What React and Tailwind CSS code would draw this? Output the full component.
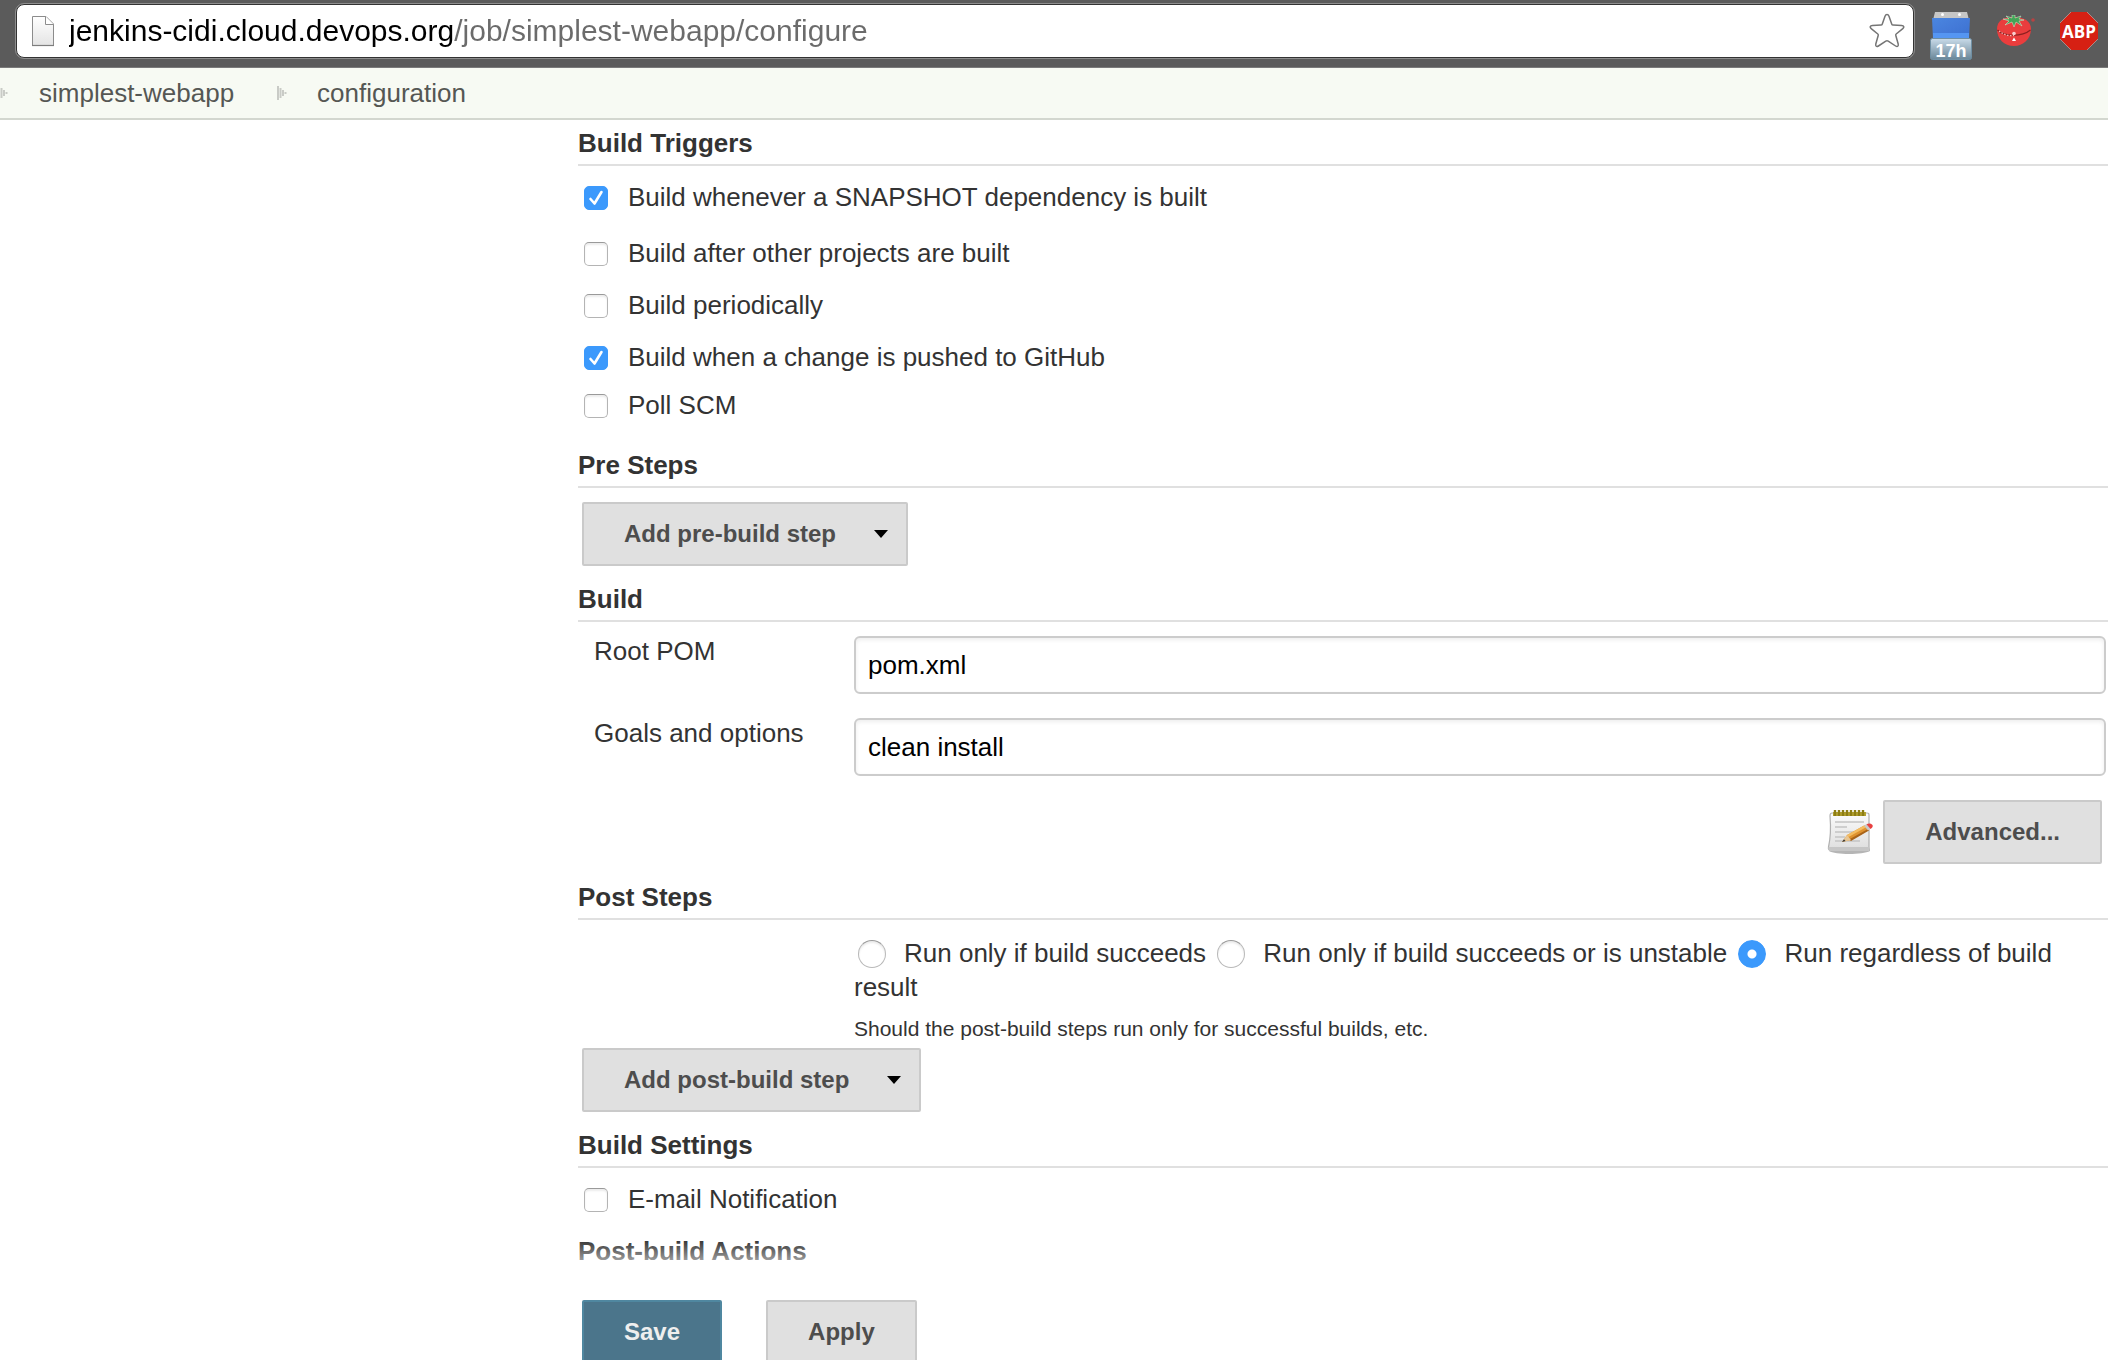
import React from "react";

function PageIcon() {
  return (
    <svg width="24" height="32" viewBox="0 0 24 32" aria-hidden="true" className="shrink-0">
      <defs>
        <linearGradient id="page" x1="0" y1="0" x2="0" y2="1">
          <stop offset="0" stopColor="#ffffff" />
          <stop offset="1" stopColor="#e4e4e4" />
        </linearGradient>
      </defs>
      <path d="M1.5 1.5H15L22.5 9V30.5H1.5Z" fill="url(#page)" stroke="#8c8c8c" strokeWidth="1" />
      <path d="M14.5 1.5V9.5H22.5" fill="#fff" stroke="#8c8c8c" strokeWidth="1" />
      <path d="M1 30.5H23" stroke="#7d7d7d" strokeWidth="1.2" />
    </svg>
  );
}

function StarIcon() {
  return (
    <svg width="36" height="36" viewBox="0 0 36 36" aria-hidden="true">
      <path
        d="M18 1.5C19 1.5 19.6 2.2 20 3.2L22.8 11.2C23 11.8 23.4 12 24 12L32.6 12.4C35 12.6 35.5 14.2 33.8 15.6L27.2 21C26.7 21.4 26.6 21.9 26.8 22.5L29.2 31C29.7 33.2 28.4 34.2 26.6 33L19.2 28.1C18.4 27.6 17.6 27.6 16.8 28.1L9.4 33C7.6 34.2 6.3 33.2 6.8 31L9.2 22.5C9.4 21.9 9.3 21.4 8.8 21L2.2 15.6C0.5 14.2 1 12.6 3.4 12.4L12 12C12.6 12 13 11.8 13.2 11.2L16 3.2C16.4 2.2 17 1.5 18 1.5Z"
        fill="#fff"
        stroke="#757575"
        strokeWidth="1.5"
      />
    </svg>
  );
}

function CalendarIcon() {
  return (
    <svg width="42" height="48" viewBox="0 0 42 48" aria-hidden="true">
      <defs>
        <linearGradient id="calBlue" x1="0" y1="0" x2="1" y2="1">
          <stop offset="0" stopColor="#4a86e0" />
          <stop offset="0.5" stopColor="#447ad8" />
          <stop offset="1" stopColor="#3a70cf" />
        </linearGradient>
        <linearGradient id="calBadge" x1="0" y1="0" x2="0" y2="1">
          <stop offset="0" stopColor="#c9dbe9" />
          <stop offset="1" stopColor="#6a8799" />
        </linearGradient>
      </defs>
      <path d="M5 0H37L38.5 6H3.500Z" fill="#c6c6c6" />
      <circle cx="12.500" cy="2.500" r="1.500" fill="#fff" />
      <circle cx="29.500" cy="2.500" r="1.500" fill="#fff" />
      <path d="M2 6H40L39 27H3Z" fill="url(#calBlue)" />
      <path d="M3 21H39V27H3Z" fill="#5596f2" />
      <rect x="0.500" y="26.500" width="41" height="21" rx="2" fill="url(#calBadge)" stroke="#6f8fa3" />
      <text x="21" y="45" textAnchor="middle" fontFamily="Liberation Sans, sans-serif" fontWeight="700" fontSize="18" fill="#fff">
        17h
      </text>
    </svg>
  );
}

function TomatoIcon() {
  return (
    <svg width="40" height="32" viewBox="0 0 40 32" aria-hidden="true">
      <path d="M1 14C1 6 7 2 17 2C28 2 35 6 35 14C35 24 27 31 18 31C8 31 1 24 1 14Z" fill="#ea3d3d" />
      <path d="M1.500 15C8 22 26 22 34.500 15" fill="none" stroke="#8e2020" strokeWidth="1.200" />
      <path d="M3 16C8 20 13 21 18 20.500" fill="none" stroke="#f6b5b5" strokeWidth="1.200" strokeDasharray="1.500 1.500" />
      <path
        d="M16 0L19 0L19 3L25 1L23 4L28 5L23 6L26 11L20 7L18 12L16 7L9 10L13 6L7 4L13 4L10 1L16 3Z"
        fill="#43a457"
        stroke="#d7f2d9"
        strokeWidth="0.500"
      />
      <circle cx="18" cy="18.500" r="1.800" fill="#f8d0d0" />
      <path d="M16 26L18 22.500L20 26Z" fill="#fff" />
      <circle cx="37" cy="5" r="1.800" fill="#b84242" />
    </svg>
  );
}

function AdblockIcon() {
  return (
    <svg width="38" height="38" viewBox="0 0 38 38" aria-hidden="true">
      <path d="M11 0H27L38 11V27L27 38H11L0 27V11Z" fill="#d62013" />
      <path d="M11 0L0 11M27 0L38 11M38 27L27 38M0 27L11 38" stroke="#b9aaa8" strokeWidth="0.700" />
      <text x="19" y="26" textAnchor="middle" fontFamily="Open Sans, sans-serif" fontWeight="700" fontSize="17" fill="#fff">
        ABP
      </text>
    </svg>
  );
}

function NotepadIcon() {
  return (
    <svg width="48" height="46" viewBox="0 0 48 46" role="img" aria-label="Customized" className="shrink-0">
      <defs>
        <linearGradient id="pad" x1="0" y1="0" x2="0" y2="1">
          <stop offset="0" stopColor="#fbfbfb" />
          <stop offset="1" stopColor="#dedede" />
        </linearGradient>
      </defs>
      <path d="M2 42C8 46 36 46 43 42L42 38H3Z" fill="#b5b5b5" />
      <path d="M5 4Q3 4 3 7Q4.500 25 1.500 38Q1 41 3 41H42V6Q42 4 40 4Z" fill="url(#pad)" stroke="#b0b0b0" strokeWidth="1.200" />
      <path d="M1.500 38Q1 42 3 42H42V38Z" fill="#c6c6c6" />
      <rect x="6" y="3" width="33" height="4" fill="#b3a22f" />
      <path d="M8 1V7M12 1V7M16 1V7M20 1V7M24 1V7M28 1V7M32 1V7M36 1V7" stroke="#8d7d14" strokeWidth="2.400" />
      <path d="M8 13H37M8 18H20M8 23H30M8 28H18M8 32H33" stroke="#c3c3c3" strokeWidth="1.300" />
      <path d="M15 33L20 26L38 16L42 21L24 31Z" fill="#df9330" />
      <path d="M20 26L38 16L39.500 18L21.500 28Z" fill="#f4bd62" />
      <path d="M22 30.500L41 20L42 21.500L24 32Z" fill="#a9641a" />
      <path d="M15 33L20 26L24 31Z" fill="#e8c795" />
      <path d="M15 33L17 30.200L18.500 32Z" fill="#333" />
      <path d="M37 16.500L40 15L43.500 19.500L41 21.500Z" fill="#c9c9c9" />
      <path d="M39.500 15.200Q43 13.500 45.500 16Q46.500 18 43.500 20Z" fill="#e84040" />
    </svg>
  );
}

function CrumbArrow() {
  return (
    <svg width="10" height="14" viewBox="0 0 10 14" aria-hidden="true" className="shrink-0">
      <path d="M1 0V14M3.500 2V12M6 4V10M8.500 6V8" stroke="#c9cbc6" strokeWidth="2" />
    </svg>
  );
}

function BrowserBar() {
  return (
    <header className="flex items-start gap-4 border-b border-[#7a7a7a] bg-[#5b5b5b] pt-1 pr-2.5 pb-[7px] pl-4">
      <div className="flex h-[54px] min-w-0 flex-1 items-center gap-[14px] rounded-lg border border-[#333] bg-white pr-2 pl-[14px] outline outline-[#8e8e8e]">
        <PageIcon />
        <input
          type="text"
          aria-label="Address"
          defaultValue="jenkins-cidi.cloud.devops.org/job/simplest-webapp/configure"
          className="h-12 min-w-0 flex-1 bg-[linear-gradient(to_right,#000_385px,#6b6b6b_385px)] bg-clip-text text-[30px] text-[#6b6b6b] outline-none [-webkit-text-fill-color:transparent]"
        />
        <button type="button" aria-label="Bookmark this page">
          <StarIcon />
        </button>
      </div>
      <div className="flex items-start gap-6 pt-2">
        <button type="button" aria-label="Calendar">
          <CalendarIcon />
        </button>
        <button type="button" aria-label="Tomato timer" className="pt-[3px]">
          <TomatoIcon />
        </button>
        <button type="button" aria-label="Adblock Plus">
          <AdblockIcon />
        </button>
      </div>
    </header>
  );
}

function Breadcrumbs() {
  return (
    <nav aria-label="Breadcrumb" className="flex items-center border-b-2 border-[#d3d7cf] bg-[#f7faf3] py-2 text-[#555753]">
      <span className="-ml-0.5 flex">
        <CrumbArrow />
      </span>
      <a href="#job" className="ml-[31px]">
        simplest-webapp
      </a>
      <span className="mr-[30px] ml-[43px] flex">
        <CrumbArrow />
      </span>
      <a href="#configuration">configuration</a>
    </nav>
  );
}

function SectionTitle({ children }) {
  return <h2 className="border-b-2 border-[#e0e0e0] pb-1 font-bold">{children}</h2>;
}

function CheckRow({ label, checked = false }) {
  return (
    <label className="flex items-start pl-1.5">
      <span className="mt-1.5 mr-5 grid size-6">
        <input
          type="checkbox"
          defaultChecked={checked}
          className="peer col-start-1 row-start-1 size-6 appearance-none rounded-[5px] border border-[#b4b4b4] border-t-[#9a9a9a] bg-white shadow-[inset_0_2px_2px_#ececec] checked:border-[#3b99fc] checked:bg-[#3b99fc] checked:shadow-none"
        />
        <svg
          viewBox="0 0 24 24"
          aria-hidden="true"
          className="pointer-events-none col-start-1 row-start-1 hidden size-6 peer-checked:block"
        >
          <path d="M6.500 13L10.500 17.500L17.500 6" fill="none" stroke="#fff" strokeWidth="2.600" strokeLinecap="round" strokeLinejoin="round" />
        </svg>
      </span>
      {label}
    </label>
  );
}

function RadioOption({ label, checked = false }) {
  return (
    <label>
      <input
        type="radio"
        name="run-condition"
        defaultChecked={checked}
        className="mr-[18px] ml-1 inline-block size-7 appearance-none rounded-full border border-[#b9b9b9] border-t-[#9a9a9a] bg-white align-[-6px] shadow-[inset_0_2px_2px_#ececec] checked:border-[#3b99fc] checked:bg-[radial-gradient(circle,#fff_4px,#3b99fc_5px)] checked:shadow-none"
      />
      {label}
    </label>
  );
}

const buttonGray = "h-16 rounded-[2px] border-2 border-[#cacaca] bg-[#e0e0e0] text-[24px] font-bold text-[#4d4d4d]";

function MenuButton({ children }) {
  return (
    <button type="button" className={`${buttonGray} ml-1 flex items-center pr-[18px] pl-10`}>
      {children}
      <svg width="14" height="8" viewBox="0 0 14 8" aria-hidden="true" className="ml-[38px]">
        <path d="M0 0H14L7 8Z" fill="#000" />
      </svg>
    </button>
  );
}

function TextRow({ id, label, value }) {
  return (
    <div className="flex items-start">
      <label htmlFor={id} className="w-[276px] shrink-0 pl-4">
        {label}
      </label>
      <input
        id={id}
        type="text"
        defaultValue={value}
        className="mt-0.5 mr-0.5 h-[58px] min-w-0 flex-1 rounded-[6px] border-2 border-[#cccccc] bg-white px-3 text-black shadow-[inset_0_2px_4px_#eeeeee]"
      />
    </div>
  );
}

export default function App() {
  return (
    <div className="flex h-screen flex-col overflow-hidden bg-white font-['Liberation_Sans',Arial,sans-serif] text-[26px] leading-[34px] text-[#333]">
      <BrowserBar />
      <Breadcrumbs />
      <form className="pt-1.5 pl-[578px]">
        <SectionTitle>Build Triggers</SectionTitle>
        <div className="flex flex-col items-start pt-[14px]">
          <CheckRow label="Build whenever a SNAPSHOT dependency is built" checked />
          <div className="flex flex-col items-start gap-[18px] pt-[22px]">
            <CheckRow label="Build after other projects are built" />
            <CheckRow label="Build periodically" />
            <CheckRow label="Build when a change is pushed to GitHub" checked />
          </div>
          <div className="pt-[14px] pb-[26px]">
            <CheckRow label="Poll SCM" />
          </div>
        </div>

        <SectionTitle>Pre Steps</SectionTitle>
        <div className="pt-[14px] pb-4">
          <MenuButton>Add pre-build step</MenuButton>
        </div>

        <SectionTitle>Build</SectionTitle>
        <div className="flex flex-col gap-[22px] pt-3">
          <TextRow id="root-pom" label="Root POM" value="pom.xml" />
          <TextRow id="goals" label="Goals and options" value="clean install" />
        </div>
        <div className="flex items-center justify-end gap-2 pt-6 pr-1.5 pb-4">
          <NotepadIcon />
          <button type="button" className={`${buttonGray} px-10`}>
            Advanced...
          </button>
        </div>

        <SectionTitle>Post Steps</SectionTitle>
        <div className="pt-4 pr-10 pl-[276px]">
          <RadioOption label="Run only if build succeeds" />{" "}
          <RadioOption label="Run only if build succeeds or is unstable" />{" "}
          <RadioOption label="Run regardless of build result" checked />
          <p className="pt-2 pb-0.5 text-[21px]">Should the post-build steps run only for successful builds, etc.</p>
        </div>
        <div className="pb-4">
          <MenuButton>Add post-build step</MenuButton>
        </div>

        <SectionTitle>Build Settings</SectionTitle>
        <div className="flex pt-[14px] pb-[18px]">
          <CheckRow label="E-mail Notification" />
        </div>
        <h2 className="font-bold">Post-build Actions</h2>

        <div className="relative -mt-7 h-10 bg-linear-to-b from-white/0 to-white" />
        <div className="flex gap-11 bg-white pt-5 pl-1">
          <button
            type="submit"
            className="h-16 rounded-[2px] border-2 border-[#4f87a0] bg-[#4b758b] px-10 text-[24px] font-bold text-[#eeeeee]"
          >
            Save
          </button>
          <button type="button" className={`${buttonGray} px-10`}>
            Apply
          </button>
        </div>
      </form>
    </div>
  );
}
